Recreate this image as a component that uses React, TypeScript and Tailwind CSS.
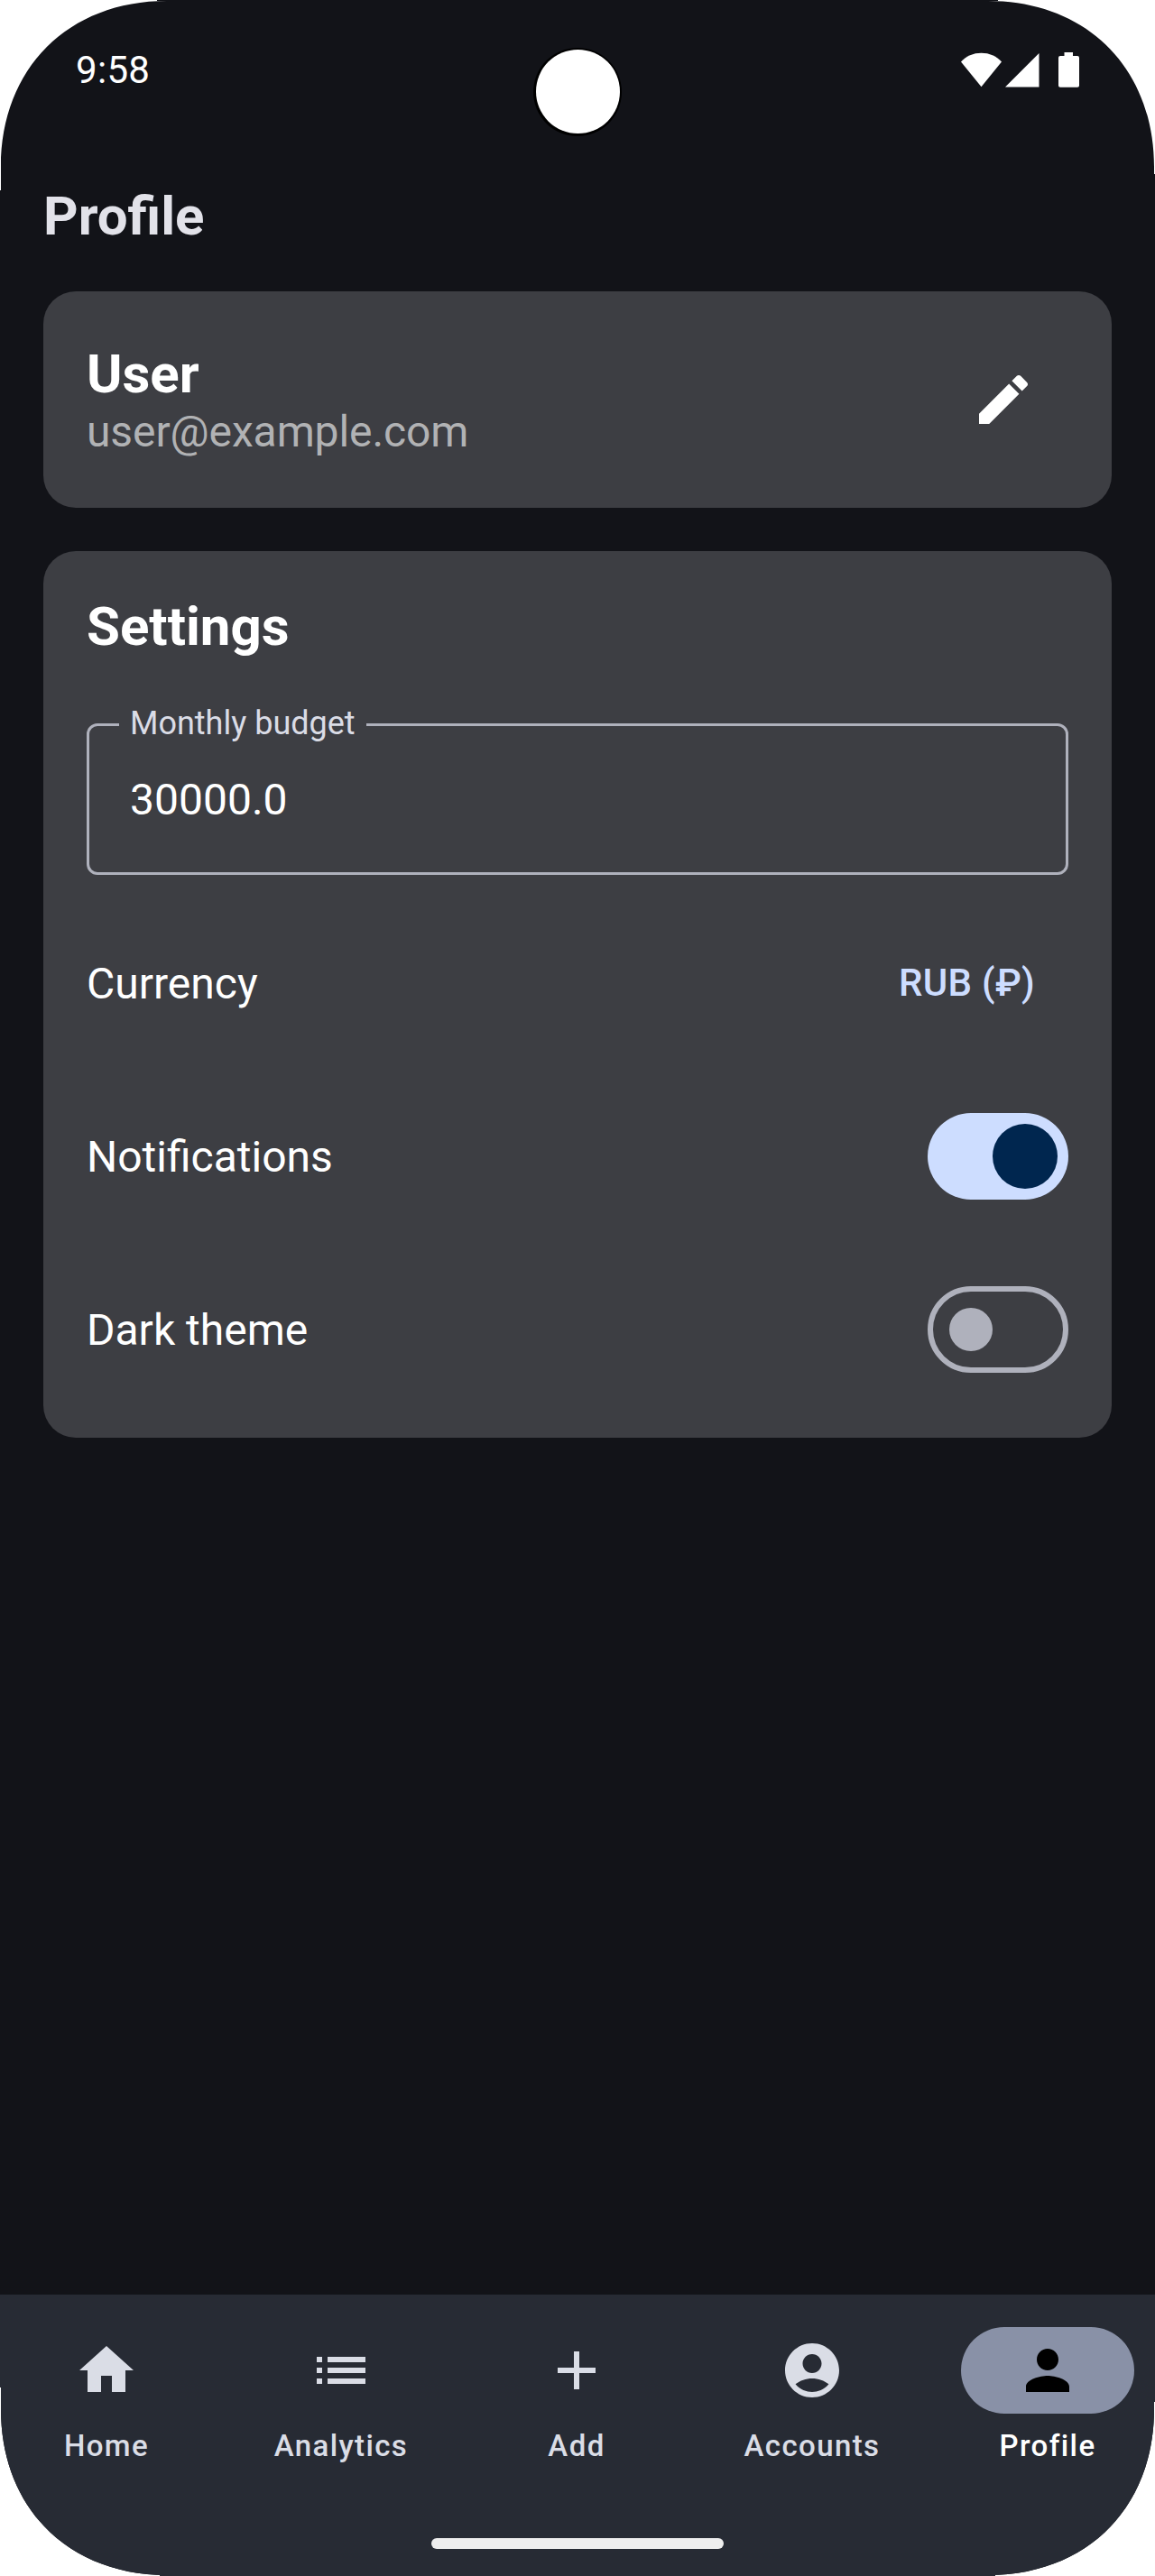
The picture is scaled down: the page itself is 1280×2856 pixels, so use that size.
import type { ReactNode } from "react";

function Icon({ d, className }: { d: string; className: string }) {
  return (
    <svg viewBox="0 0 24 24" fill="currentColor" className={className} aria-hidden="true">
      <path d={d} />
    </svg>
  );
}

const EDIT =
  "M3 17.25V21h3.75L17.81 9.94l-3.75-3.75L3 17.25zM20.71 7.04c.39-.39.39-1.02 0-1.41l-2.34-2.34c-.39-.39-1.02-.39-1.41 0l-1.83 1.83 3.75 3.75 1.83-1.83z";

const NAV = [
  { label: "Home", d: "M10 20v-6h4v6h5v-8h3L12 3 2 12h3v8z" },
  {
    label: "Analytics",
    d: "M3 13h2v-2H3v2zm0 4h2v-2H3v2zm0-8h2V7H3v2zm4 4h14v-2H7v2zm0 4h14v-2H7v2zM7 7v2h14V7H7z",
  },
  { label: "Add", d: "M19 13h-6v6h-2v-6H5v-2h6V5h2v6h6v2z" },
  {
    label: "Accounts",
    d: "M12 2C6.48 2 2 6.48 2 12s4.48 10 10 10 10-4.48 10-10S17.52 2 12 2zm0 4c1.93 0 3.5 1.57 3.5 3.5S13.93 13 12 13s-3.5-1.57-3.5-3.5S10.07 6 12 6zm0 14c-2.03 0-4.43-.82-6.14-2.88C7.55 15.8 9.68 15 12 15s4.45.8 6.14 2.12C16.43 19.18 14.03 20 12 20z",
  },
  {
    label: "Profile",
    active: true,
    d: "M12 12c2.21 0 4-1.79 4-4s-1.79-4-4-4-4 1.79-4 4 1.79 4 4 4zm0 2c-2.67 0-8 1.34-8 4v2h16v-2c0-2.66-5.33-4-8-4z",
  },
];

function StatusBar() {
  return (
    <header className="relative flex h-[156px] items-start justify-between px-[84px] pt-[53px] text-white">
      <span className="text-[42px] leading-[49px] tracking-[0.3px]">9:58</span>
      {/* Front camera cut-out */}
      <div className="absolute left-[591px] top-[53px] size-[98px] rounded-full bg-black pl-[3px] pt-[2px]">
        <div className="size-[93px] rounded-full bg-white" />
      </div>
      <svg width="132" height="39" viewBox="0 0 132 39" fill="currentColor" className="mt-[5px]" aria-hidden="true">
        <path d="M1 10.500C7 4 14.500 0.700 23.500 0.700S40 4 46 10.500L23.500 38.200z" />
        <path d="M87.500 1V38.500H50z" />
        <path d="M115.500 0h9.500v4h5q2 0 2 2v31q0 1.700-2 1.700h-19q-2 0-2-1.700V6q0-2 2-2h4.500z" />
      </svg>
    </header>
  );
}

function Switch({ on }: { on?: boolean }) {
  return on ? (
    <button role="switch" aria-checked="true" className="flex h-24 w-[156px] items-center justify-end rounded-full bg-[#cdddff] pr-3">
      <span className="size-[72px] rounded-full bg-[#00264f]" />
    </button>
  ) : (
    <button role="switch" aria-checked="false" className="flex h-24 w-[156px] items-center rounded-full border-6 border-[#afb1bc] pl-[18px]">
      <span className="size-12 rounded-full bg-[#afb1bc]" />
    </button>
  );
}

function Row({ label, children }: { label: string; children: ReactNode }) {
  return (
    <div className="flex h-36 items-center justify-between">
      <span className="pt-px text-[48px] leading-[57px]">{label}</span>
      {children}
    </div>
  );
}

export default function App() {
  return (
    <div className="h-[2856px] w-[1280px] bg-white">
      <div className="flex h-full flex-col bg-[#121318] font-['Roboto',sans-serif] [clip-path:path('M0_211H1V185C1_75.7_75.7_1_185_1H174V0H1106V1H1095C1204.3_1_1279_75.7_1279_185V193H1280V2663H1279V2671C1279_2780.3_1204.3_2855_1095_2855H1103V2856H177V2855H185C75.7_2855_1_2780.3_1_2671V2647H0Z')]">
        <StatusBar />
        <main className="flex flex-1 flex-col px-12">
          <h1 className="mt-12 text-[60px] font-bold leading-[71px] text-[#e2e2e9]">Profile</h1>

          <section className="mt-12 flex h-60 items-center justify-between rounded-[36px] bg-[#3d3e43] px-12">
            <div>
              <h2 className="text-[60px] font-bold leading-[71px] text-white">User</h2>
              <p className="text-[48px] leading-[57px] tracking-[-0.1px] text-[#b1b2b4]">user@example.com</p>
            </div>
            <button className="flex size-36 items-center justify-center text-white" aria-label="Edit">
              <Icon d={EDIT} className="size-[72px]" />
            </button>
          </section>

          <section className="mt-12 flex h-[983px] flex-col rounded-[36px] bg-[#3d3e43] p-12 text-white">
            <h2 className="text-[60px] font-bold leading-[71px]">Settings</h2>
            <div className="relative mt-[72px] flex h-[168px] shrink-0 items-center rounded-[12px] border-3 border-[#afb1bc] pl-[45px]">
              <span className="absolute left-[33px] top-[-30px] bg-[#3d3e43] px-3 text-[36px] leading-[54px] text-[#dadce6]">
                Monthly budget
              </span>
              <span className="pt-px text-[48px] leading-[57px]">30000.0</span>
            </div>
            <div className="mt-12 flex flex-col gap-12">
              <Row label="Currency">
                <span className="pr-[37px] text-[42px] font-medium leading-[60px] tracking-[0.3px] text-[#cdddff]">RUB (₽)</span>
              </Row>
              <Row label="Notifications">
                <Switch on />
              </Row>
              <Row label="Dark theme">
                <Switch />
              </Row>
            </div>
          </section>
        </main>

        <nav className="flex h-[312px] flex-col items-center bg-[#272b34] pt-9">
          <div className="grid grid-cols-[236px_284px_238px_284px_238px]">
            {NAV.map((item) => (
              <div key={item.label} className="flex flex-col items-center">
                <span
                  className={
                    item.active
                      ? "flex h-24 w-48 items-center justify-center rounded-full bg-[#8991a7] text-black"
                      : "flex h-24 w-48 items-center justify-center text-[#dadde6]"
                  }
                >
                  <Icon d={item.d} className="size-[72px]" />
                </span>
                <span
                  className={
                    item.active
                      ? "mt-3 text-[33px] font-medium leading-[48px] tracking-[1.4px] text-white"
                      : "mt-3 text-[33px] font-medium leading-[48px] tracking-[1.4px] text-[#dadde6]"
                  }
                >
                  {item.label}
                </span>
              </div>
            ))}
          </div>
          <div className="mt-[78px] h-3 w-[324px] rounded-full bg-[#eeeeee]" />
        </nav>
      </div>
    </div>
  );
}
